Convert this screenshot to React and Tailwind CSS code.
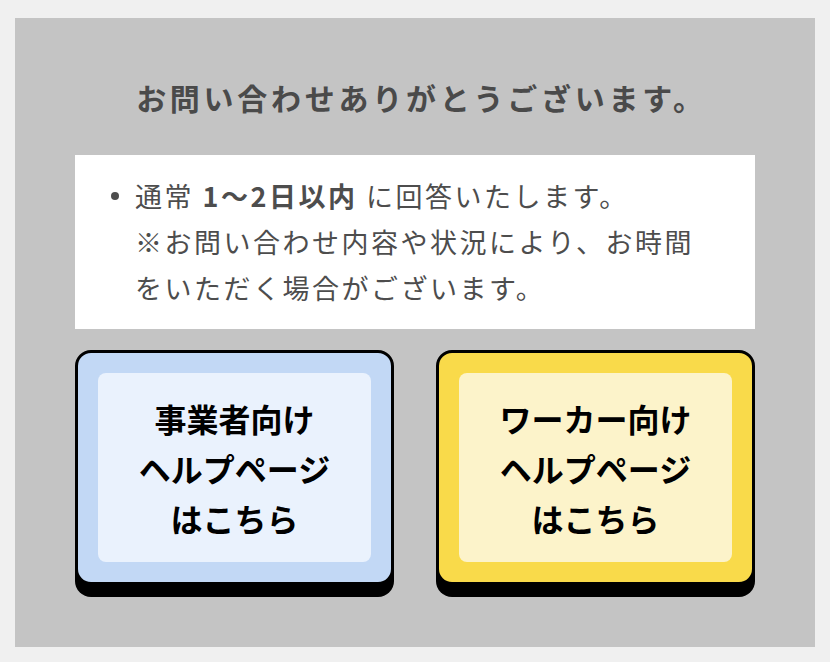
import React from 'react';

const jp = { fontFamily: '"Noto Sans CJK JP", "Noto Sans", sans-serif' };

const HelpButton = ({ lines, outer, inner }) => (
    <a
        href="#"
        className={`block rounded-[16px] border-[3px] border-black p-5 shadow-[0_12px_0_#000] ${outer}`}
    >
        <div className={`flex h-[189px] flex-col items-center justify-center rounded-[8px] ${inner}`}>
            {lines.map((line, i) => (
                <span key={i} className="text-[32px] font-bold leading-[50px] text-black">
                    {line}
                </span>
            ))}
        </div>
    </a>
);

export default function App() {
    return (
        <div className="min-h-[662px] bg-[#f0f0f0] px-[15px] pt-[18px] pb-[17px]" style={jp}>
            <div className="bg-[#c4c4c4] px-[60px] pt-[59px] pb-[62px]">
                <h1 className="pl-[13px] text-center text-[30px] font-bold leading-[40px] tracking-[3.75px] text-[#4a4a4a]">
                    お問い合わせありがとうございます。
                </h1>

                <div className="mt-[38px] bg-white py-[18px] pl-[36px] pr-[20px]">
                    <div className="flex">
                        <span className="mt-[19px] mr-[16px] h-[8px] w-[8px] shrink-0 rounded-full bg-[#4d4d4d]" />
                        <p className="text-[27px] leading-[46px] tracking-[2.5px] text-[#4d4d4d]">
                            通常 <strong className="font-bold">1〜2日以内</strong> に回答いたします。
                            <br />
                            ※お問い合わせ内容や状況により、お時間
                            <br />
                            をいただく場合がございます。
                        </p>
                    </div>
                </div>

                <div className="mt-[21px] grid grid-cols-2 gap-[42px]">
                    <HelpButton
                        lines={['事業者向け', 'ヘルプページ', 'はこちら']}
                        outer="bg-[#c2d8f5]"
                        inner="bg-[#eaf2fd]"
                    />
                    <HelpButton
                        lines={['ワーカー向け', 'ヘルプページ', 'はこちら']}
                        outer="bg-[#f9da4a]"
                        inner="bg-[#fcf3ca]"
                    />
                </div>
            </div>
        </div>
    );
}
